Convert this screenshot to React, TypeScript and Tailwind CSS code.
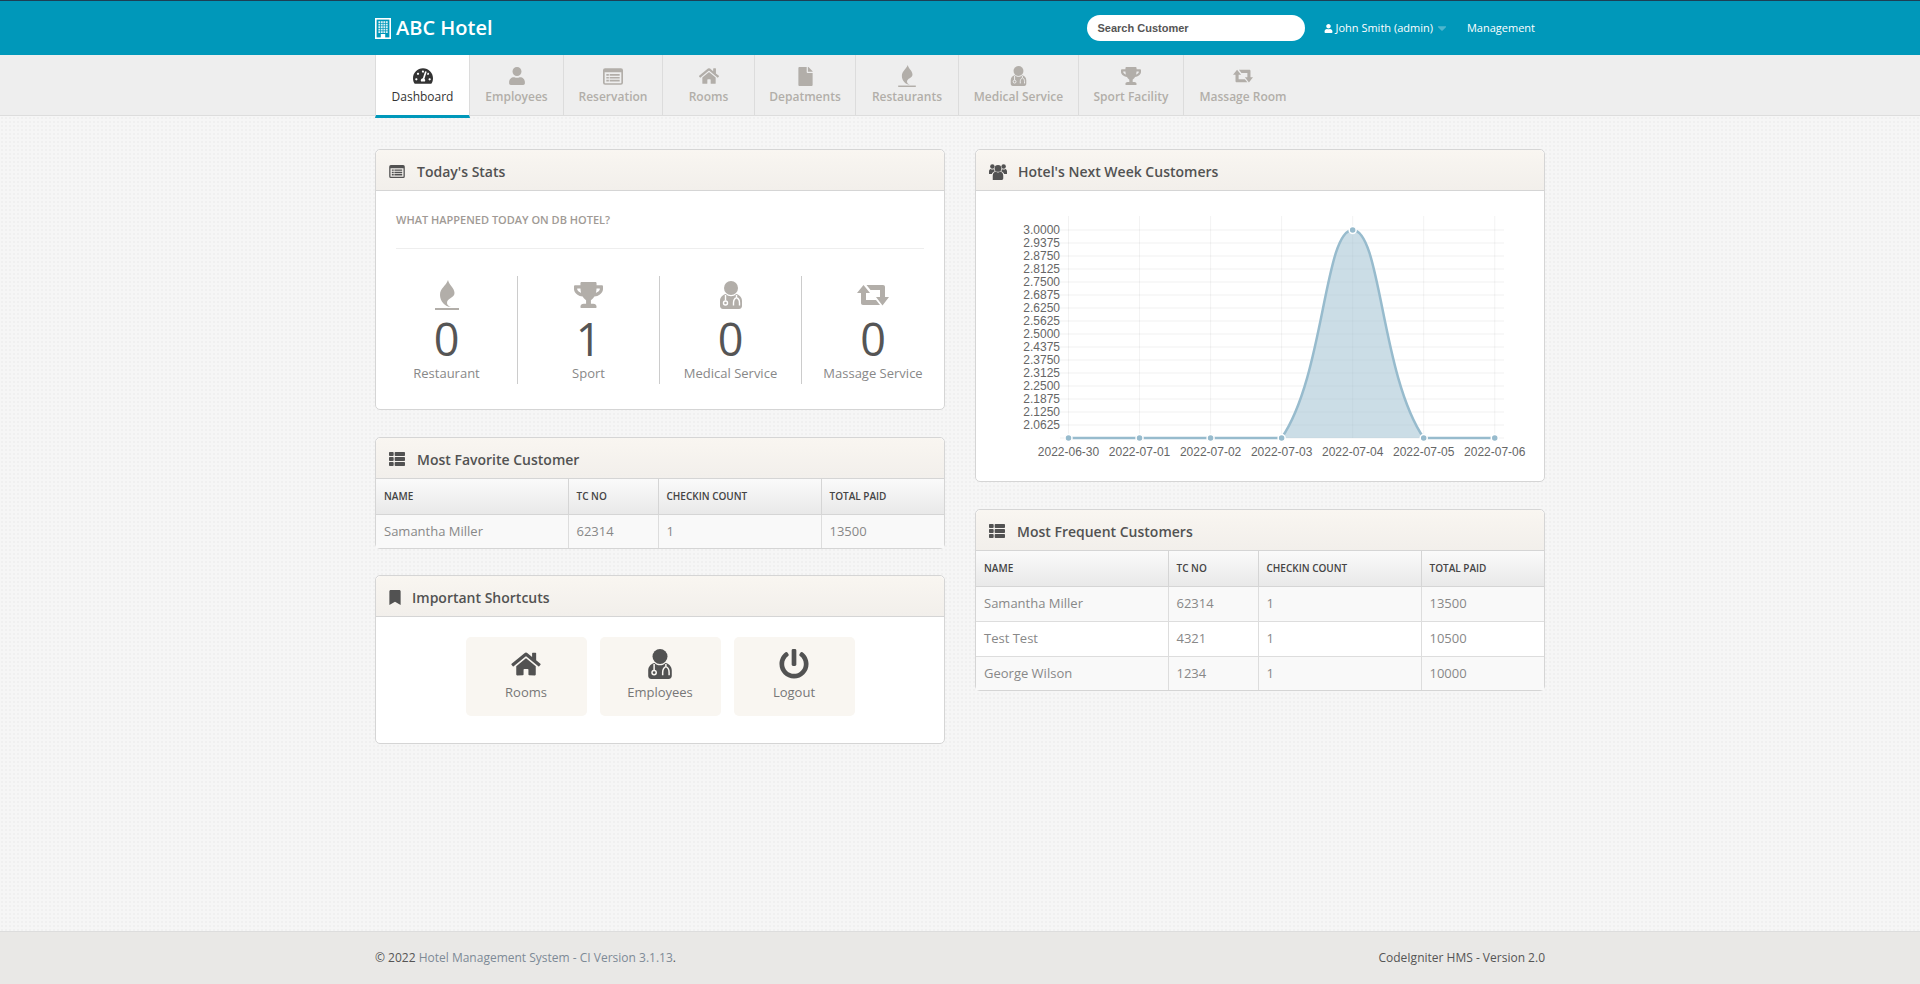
import type { ReactNode } from "react";
import {
  FaBookmark,
  FaCaretDown,
  FaFile,
  FaHome,
  FaPowerOff,
  FaTachometerAlt,
  FaThList,
  FaTrophy,
  FaUser,
} from "react-icons/fa";

function BuildingIcon() {
  const windows = [];
  for (let r = 0; r < 5; r++) {
    for (let c = 0; c < 4; c++) {
      windows.push(<rect key={`${r}-${c}`} x={3.4 + c * 2.5} y={3.2 + r * 2.5} width="1.8" height="1.8" fill="#fff" opacity={0.85} />);
    }
  }
  return (
    <svg viewBox="0 0 16 21" className="h-[21px] w-[16px]">
      <rect x="0.8" y="0.8" width="14.4" height="19.4" fill="none" stroke="#fff" strokeWidth="1.6" />
      {windows}
      <rect x="5.8" y="16" width="4.4" height="4" fill="#fff" />
    </svg>
  );
}

function ListAltIcon({ className }: { className?: string }) {
  return (
    <svg viewBox="0 0 24 20" className={className} fill="currentColor">
      <path d="M2.5 0h19A2.5 2.5 0 0 1 24 2.5v15a2.5 2.5 0 0 1-2.5 2.5h-19A2.5 2.5 0 0 1 0 17.5v-15A2.5 2.5 0 0 1 2.5 0zM2 5v12.5c0 .3.2.5.5.5h19c.3 0 .5-.2.5-.5V5z" fillRule="evenodd" />
      <path d="M4 7h3v2H4zM8 7h12v2H8zM4 10.5h3v2H4zM8 10.5h12v2H8zM4 14h3v2H4zM8 14h12v2H8z" />
    </svg>
  );
}

function FlameIcon({ className }: { className?: string }) {
  return (
    <svg viewBox="0 0 24 30" className={className} fill="currentColor">
      <path d="M13 0C14 5 19.5 8 19.5 13C19.5 18 12 18 12 23C12 25 14 26.5 16 27C10 27 5 21 5 15C5 8 11 6 13 0Z" />
      <rect x="0" y="28" width="24" height="2" />
    </svg>
  );
}

function DoctorIcon({ className, cut = "#fff" }: { className?: string; cut?: string }) {
  return (
    <svg viewBox="0 0 24 28" className={className} fill="currentColor">
      <circle cx="12" cy="7" r="7" />
      <path d="M1 25v-5c0-4 3-6.5 6-7c1 1.5 3 2.2 5 2.2s4-.7 5-2.2c3 .5 6 3 6 7v5c0 1.5-1 3-3 3H4c-2 0-3-1.5-3-3z" />
      <g fill="none" stroke={cut} strokeWidth="1.4">
        <path d="M6.5 14v5.500" />
        <circle cx="6.5" cy="22" r="2" />
        <path d="M17.5 14v2.500c2 .8 3 3 3 5.500v2.500M14.500 24.500V22c0-2.500 1-4.500 3-5.500" />
      </g>
    </svg>
  );
}

function RetweetIcon({ className }: { className?: string }) {
  return (
    <svg viewBox="0 0 32 22" className={className} fill="currentColor">
      <path d="M6.500 1L13 9H9V16H19L23 21H6C4.800 21 4 20.200 4 19V9H0Z" />
      <path d="M9.500 1H26C27.200 1 28 1.800 28 3V13H32L25.500 21.500L19 13H23V6H13.500Z" />
    </svg>
  );
}

function UsersIcon({ className }: { className?: string }) {
  return (
    <svg viewBox="0 0 24 24" className={className} fill="currentColor">
      <circle cx="12" cy="8.500" r="4.500" />
      <path d="M5 24v-6c0-3 2-5 4-5.500c1 1 2 1.500 3 1.500s2-.5 3-1.500c2 .5 4 2.500 4 5.500v3.500c0 1.500-1 2.500-2.500 2.500z" />
      <circle cx="4.500" cy="6" r="3" />
      <circle cx="19.500" cy="6" r="3" />
      <path d="M0 16v-3.500c0-1.500 1-2.800 2-3.200c1.500 1 3 1 4.500.3c.3 1 .6 1.800 1.300 2.600c-2 .8-3.800 2-4 3.800z" />
      <path d="M24 16v-3.500c0-1.500-1-2.800-2-3.200c-1.500 1-3 1-4.500.3c-.3 1-.6 1.800-1.300 2.600c2 .8 3.800 2 4 3.800z" />
    </svg>
  );
}

const tabs: { label: string; icon: ReactNode; width: string; active?: boolean }[] = [
  { label: "Dashboard", icon: <FaTachometerAlt className="h-[20px] w-[20px]" />, width: "w-[95px]", active: true },
  { label: "Employees", icon: <FaUser className="h-[18px] w-[18px]" />, width: "w-[94px]" },
  { label: "Reservation", icon: <ListAltIcon className="h-[17px] w-[20px]" />, width: "w-[99px]" },
  { label: "Rooms", icon: <FaHome className="h-[18px] w-[20px]" />, width: "w-[92px]" },
  { label: "Depatments", icon: <FaFile className="h-[19px] w-[15px]" />, width: "w-[101px]" },
  { label: "Restaurants", icon: <FlameIcon className="h-[22px] w-[18px]" />, width: "w-[103px]" },
  { label: "Medical Service", icon: <DoctorIcon className="h-[20px] w-[17px]" cut="#eeeeee" />, width: "w-[120px]" },
  { label: "Sport Facility", icon: <FaTrophy className="h-[18px] w-[20px]" />, width: "w-[105px]" },
  { label: "Massage Room", icon: <RetweetIcon className="h-[14px] w-[20px]" />, width: "w-[118px] border-r-0" },
];

function Card({ icon, title, children, className = "mb-[27px]" }: { icon: ReactNode; title: string; children: ReactNode; className?: string }) {
  return (
    <section className={`rounded-[5px] border border-[#d5d5d5] bg-white ${className}`}>
      <div className="flex h-[41px] items-center rounded-t-[5px] border-b border-[#d5d5d5] bg-gradient-to-b from-[#f9f6f1] to-[#f2efeb] pt-[2px] pl-[13px] text-[#525252]">
        {icon}
        <h3 className="text-[14px] font-semibold">{title}</h3>
      </div>
      {children}
    </section>
  );
}

function CustomerTable({ rows }: { rows: string[][] }) {
  const cols = ["w-[192px]", "w-[90px]", "w-[163px]", "w-[123px]"];
  const heads = ["Name", "TC No", "Checkin Count", "Total Paid"];
  return (
    <table className="w-[568px] table-fixed border-collapse">
      <thead>
        <tr className="h-[35px] bg-gradient-to-b from-[#fafafa] to-[#e9e9e9]">
          {heads.map((h, i) => (
            <th key={h} className={`${cols[i]} border-b border-[#d5d5d5] px-2 text-left text-[10px] font-semibold text-[#444] uppercase ${i > 0 ? "border-l" : ""}`}>
              {h}
            </th>
          ))}
        </tr>
      </thead>
      <tbody>
        {rows.map((row, r) => (
          <tr key={row[0]} className={`${r < rows.length - 1 ? "h-[35px]" : "h-[34px]"} ${r % 2 === 0 ? "bg-[#f9f9f9]" : "bg-white"}`}>
            {row.map((cell, i) => (
              <td key={i} className={`border-[#dddddd] px-2 text-[13px] text-[#888] ${i > 0 ? "border-l" : ""} ${r < rows.length - 1 ? "border-b" : ""}`}>
                {cell}
              </td>
            ))}
          </tr>
        ))}
      </tbody>
    </table>
  );
}

function Stat({ icon, value, label, last }: { icon: ReactNode; value: string; label: string; last?: boolean }) {
  return (
    <div className={`flex h-[108px] w-[142px] flex-col items-center pt-[4px] ${last ? "" : "border-r border-[#ccc]"}`}>
      <div className="flex h-[30px] items-center justify-center text-[#b2aea9]">{icon}</div>
      <div className="mt-[6px] text-[45px] leading-[45px] font-medium text-[#555]">{value}</div>
      <div className="mt-[3px] text-[13px] leading-[18px] whitespace-nowrap text-[#888]">{label}</div>
    </div>
  );
}

function Shortcut({ icon, label }: { icon: ReactNode; label: string }) {
  return (
    <div className="flex h-[79px] w-[121px] flex-col items-center rounded-[5px] bg-[#f9f6f1]">
      <div className="mt-[11px] flex h-[32px] items-center justify-center text-[#525252]">{icon}</div>
      <div className="mt-[3px] text-[13px] leading-[18px] text-[#777]">{label}</div>
    </div>
  );
}

// 图表按原图像素算坐标
function Chart() {
  const xs = [0, 1, 2, 3, 4, 5, 6].map((i) => 92.5 + 71.04 * i);
  const dates = ["2022-06-30", "2022-07-01", "2022-07-02", "2022-07-03", "2022-07-04", "2022-07-05", "2022-07-06"];
  const rows = Array.from({ length: 17 }, (_, i) => i);
  const top = 39;
  const base = 247;
  const curve = `M${xs[3]} ${base} C${xs[3] + 42.9} 184.2 ${xs[4] - 28.4} ${top} ${xs[4]} ${top} C${xs[4] + 28.4} ${top} ${xs[5] - 42.9} 184.2 ${xs[5]} ${base}`;
  return (
    <svg viewBox="0 0 568 290" className="block h-[290px] w-[568px] font-['Liberation_Sans',Arial,sans-serif]">
      {rows.map((i) => (
        <line key={i} x1="84" x2="528" y1={top + i * 13} y2={top + i * 13} stroke="#000" strokeOpacity="0.04" strokeWidth="1.5" />
      ))}
      {xs.map((x) => (
        <line key={x} x1={x} x2={x} y1="25" y2={base} stroke="#000" strokeOpacity="0.05" />
      ))}
      <path d={curve} fill="#97bbcd" fillOpacity="0.5" stroke="none" />
      <path d={`M${xs[0]} ${base} L${xs[3]} ${base} ${curve.slice(curve.indexOf("C"))} L${xs[6]} ${base}`} fill="none" stroke="#97bbcd" strokeWidth="2.5" />
      {xs.map((x, i) => (
        <circle key={x} cx={x} cy={i === 4 ? top : base} r="3.5" fill="#97bbcd" stroke="#fff" strokeWidth="1.5" />
      ))}
      {rows.slice(0, 16).map((i) => (
        <text key={i} x="84" y={top + i * 13 + 4} textAnchor="end" fontSize="12" fill="#666">
          {(3 - i * 0.0625).toFixed(4)}
        </text>
      ))}
      {xs.map((x, i) => (
        <text key={x} x={x} y="265" textAnchor="middle" fontSize="12" fill="#666">
          {dates[i]}
        </text>
      ))}
    </svg>
  );
}

export default function App() {
  return (
    <div className="flex min-h-screen flex-col bg-[#f6f6f6] bg-[radial-gradient(#f0f0f0_1px,transparent_1px)] bg-[length:4px_4px] font-['Open_Sans',sans-serif]">
      <header className="h-[55px] border-t border-[#1d3f55] bg-[#0098ba]">
        <div className="mx-auto flex h-[54px] w-[1170px] items-center">
          <BuildingIcon />
          <span className="ml-[5px] text-[20px] font-semibold text-white">ABC Hotel</span>
          <input
            readOnly
            placeholder="Search Customer"
            className="ml-auto h-[26px] w-[218px] rounded-full bg-white px-[10px] font-['Liberation_Sans',Arial,sans-serif] text-[11px] font-bold outline-none placeholder:text-[#555]"
          />
          <div className="ml-[19px] flex items-center text-[11px] text-white">
            <FaUser className="mr-[2px] h-[9px] w-[9px]" />
            John Smith (admin)
            <FaCaretDown className="ml-[2px] h-[14px] w-[14px] text-[#4db6ce]" />
          </div>
          <span className="mr-[10px] ml-[18px] text-[11px] text-white">Management</span>
        </div>
      </header>

      <nav className="h-[61px] border-b border-[#ddd] bg-[#eee]">
        <ul className="mx-auto flex h-[60px] w-[1170px] items-start">
          {tabs.map((t) => (
            <li
              key={t.label}
              className={`flex flex-col items-center border-r border-[#dcdcdc] pt-[10px] text-[12px] ${t.width} ${t.active ? "relative h-[63px] border-b-[3px] border-l border-b-[#0098ba] bg-white font-medium text-[#333]" : "h-[60px] font-semibold text-[#b2aea9]"}`}
            >
              <div className="flex h-[22px] items-center justify-center">{t.icon}</div>
              <span className="mt-[1px] leading-[18px] whitespace-nowrap">{t.label}</span>
            </li>
          ))}
        </ul>
      </nav>

      <main className="mx-auto flex w-[1170px] flex-1 gap-[30px] pt-[33px]">
        <div className="w-[570px]">
          <Card icon={<ListAltIcon className="mr-[12px] h-[13px] w-[16px]" />} title="Today's Stats">
            <div className="px-5 pt-[21px] pb-[25px]">
              <div className="text-[11px] leading-[15px] font-semibold text-[#a09a95] uppercase">What happened today on DB Hotel?</div>
              <hr className="mt-[21px] border-[#eee]" />
              <div className="-mx-5 mt-[27px] flex">
                <Stat icon={<FlameIcon className="h-[30px] w-[24px]" />} value="0" label="Restaurant" />
                <Stat icon={<FaTrophy className="h-[26px] w-[29px]" />} value="1" label="Sport" />
                <Stat icon={<DoctorIcon className="h-[28px] w-[24px]" />} value="0" label="Medical Service" />
                <Stat icon={<RetweetIcon className="h-[22px] w-[32px]" />} value="0" label="Massage Service" last />
              </div>
            </div>
          </Card>
          <Card className="mb-[26px]" icon={<FaThList className="mr-[12px] h-[16px] w-[16px]" />} title="Most Favorite Customer">
            <CustomerTable rows={[["Samantha Miller", "62314", "1", "13500"]]} />
          </Card>
          <Card icon={<FaBookmark className="mr-[11px] h-[15px] w-[12px]" />} title="Important Shortcuts">
            <div className="flex justify-center gap-[13px] pt-[20px] pb-[27px]">
              <Shortcut icon={<FaHome className="h-[26px] w-[30px]" />} label="Rooms" />
              <Shortcut icon={<DoctorIcon className="h-[30px] w-[26px]" cut="#f9f6f1" />} label="Employees" />
              <Shortcut icon={<FaPowerOff className="h-[32px] w-[30px]" />} label="Logout" />
            </div>
          </Card>
        </div>
        <div className="w-[570px]">
          <Card icon={<UsersIcon className="mr-[11px] h-[18px] w-[18px]" />} title="Hotel's Next Week Customers">
            <Chart />
          </Card>
          <Card icon={<FaThList className="mr-[12px] h-[16px] w-[16px]" />} title="Most Frequent Customers">
            <CustomerTable
              rows={[
                ["Samantha Miller", "62314", "1", "13500"],
                ["Test Test", "4321", "1", "10500"],
                ["George Wilson", "1234", "1", "10000"],
              ]}
            />
          </Card>
        </div>
      </main>

      <footer className="h-[53px] border-t border-[#ddd] bg-[#e9e8e6] text-[12px] text-[#555]">
        <div className="mx-auto flex h-full w-[1170px] items-center justify-between">
          <span>
            © 2022 <span className="text-[#7d8a96]">Hotel Management System - CI Version 3.1.13</span>.
          </span>
          <span>CodeIgniter HMS - Version 2.0</span>
        </div>
      </footer>
    </div>
  );
}
